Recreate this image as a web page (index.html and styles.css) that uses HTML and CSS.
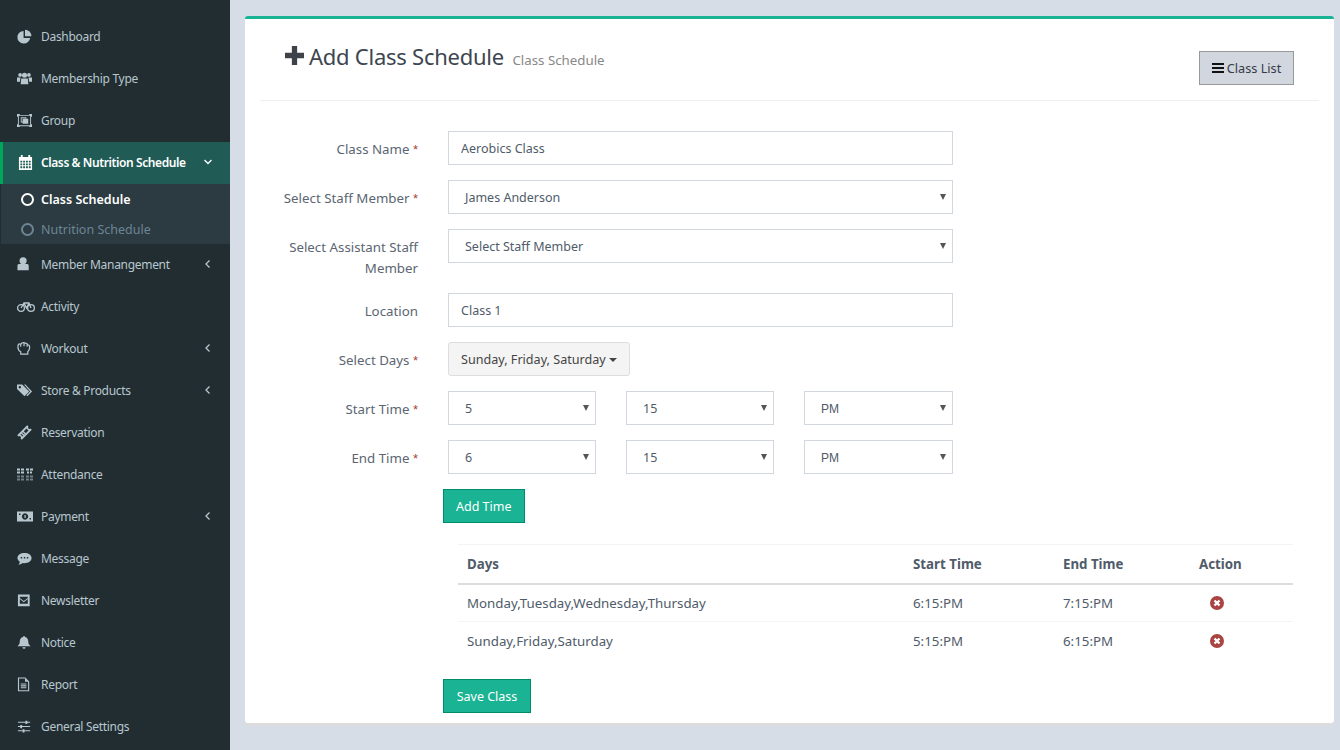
FILE: index.html
```html
<!DOCTYPE html>
<html lang="en">
<head>
    <meta charset="UTF-8">
    <title>Add Class Schedule</title>
    <link rel="stylesheet" href="styles.css">
</head>
<body>
    <aside class="sidebar">
        <ul class="menu">
            <li class="item"><svg class="ico" viewBox="0 0 16 16"><path d="M7 2a6.800 6.800 0 1 0 7 7.500H7z"/><path d="M8.500 .8a6.800 6.800 0 0 1 6.800 6.800H8.500z"/></svg><span>Dashboard</span></li>
            <li class="item"><svg class="ico" viewBox="0 0 16 16"><circle cx="3.300" cy="4.200" r="2"/><circle cx="12.700" cy="4.200" r="2"/><circle cx="8" cy="4.600" r="2.700"/><path d="M0 7h3.700l-.6 4.500H0zM16 7h-3.700l.6 4.500H16zM4.500 8h7l.6 6H3.900z"/></svg><span>Membership Type</span></li>
            <li class="item"><svg class="ico" viewBox="0 0 16 16"><path fill-rule="evenodd" d="M0 1h3v1h10V1h3v3h-1v8h1v3h-3v-1H3v1H0v-3h1V4H0zM2 3v10h12V3zM4 4.500h6V6h2v5.500H6V10H4zM5 5.500v3.500h1V6h3v-.5z"/></svg><span>Group</span></li>
            <li class="item item-open"><svg class="ico" viewBox="0 0 16 16"><path fill-rule="evenodd" d="M3 0h2v2h6V0h2v2h2v14H1V2h2zM2.500 6v2h2V6zM5.500 6v2h2V6zM8.500 6v2h2V6zM11.500 6v2h2V6zM2.500 9v2h2V9zM5.500 9v2h2V9zM8.500 9v2h2V9zM11.500 9v2h2V9zM2.500 12v2h2v-2zM5.500 12v2h2v-2zM8.500 12v2h2v-2zM11.500 12v2h2v-2z"/></svg><span>Class &amp; Nutrition Schedule</span><svg class="chev" viewBox="0 0 10 10"><path d="M1.500 3l3.500 3.500L8.500 3"/></svg></li>
            <li class="sub">
                <div class="sub-link sub-active"><i class="dot"></i>Class Schedule</div>
                <div class="sub-link"><i class="dot"></i>Nutrition Schedule</div>
            </li>
            <li class="item"><svg class="ico" viewBox="0 0 16 16"><circle cx="6.500" cy="4" r="3.800"/><path d="M2 7.500h9c1 0 1.500 1 1.500 2v4.500H.5V9.500c0-1 .5-2 1.500-2z"/></svg><span>Member Manangement</span><svg class="chev" viewBox="0 0 10 10"><path d="M6.500 1.500L3 5l3.500 3.500"/></svg></li>
            <li class="item"><svg class="ico ico-bike" viewBox="0 0 18 12"><g fill="none" stroke="currentColor" stroke-width="1.300"><circle cx="4" cy="7.500" r="3.400"/><circle cx="14" cy="7.500" r="3.400"/><path d="M4 7.500L7 2.500h5l2 5M7 2.500l2.500 5L12 2.500"/></g></svg><span>Activity</span></li>
            <li class="item"><svg class="ico" viewBox="0 0 16 16"><g fill="none" stroke="currentColor" stroke-width="1.300"><path d="M1 6c0-2 1-3 2-3l1 .5C5 2 7 1.500 8 2s3 .5 3.500 2c1 0 2 1 2 3s-1 3.500-2 4.500V14H4v-2.500C2 10.500 1 8.500 1 6z"/><path d="M4 3.500V6M7.500 2V5.500M10.800 3.500V6"/></g></svg><span>Workout</span><svg class="chev" viewBox="0 0 10 10"><path d="M6.500 1.500L3 5l3.500 3.500"/></svg></li>
            <li class="item"><svg class="ico" viewBox="0 0 16 16"><path fill-rule="evenodd" d="M0 1.500h5.500l7.500 7.500-5 5L0 6.500zM3 3.200a1.300 1.300 0 1 0 .01 0z"/><path d="M7.500 1.500h1.500l7 7.500-5 5-1-1 4-4z"/></svg><span>Store &amp; Products</span><svg class="chev" viewBox="0 0 10 10"><path d="M6.500 1.500L3 5l3.500 3.500"/></svg></li>
            <li class="item"><svg class="ico" viewBox="0 0 16 16"><path fill-rule="evenodd" transform="rotate(-45 8 8)" d="M.5 4.500h15v2a1.500 1.500 0 0 0 0 3v2H.5v-2a1.500 1.500 0 0 0 0-3zM3.500 6.500v3h1v-3zM6 6.500v3h1v-3zM8.500 6.500v3h4v-3z"/></svg><span>Reservation</span></li>
            <li class="item"><svg class="ico ico-wide" viewBox="0 0 16 12"><path d="M0 0h3v2H0zM4 0h3v2H4zM9 0h3v2H9zM13 0h3v2h-3zM0 3h3v2H0zM4 3h3v2H4zM10 3h2v2h-2zM13 3h2v2h-2z"/><path opacity=".55" d="M0 7h3v2H0zM4 7h3v2H4zM9 7h3v2H9zM13 7h3v2h-3zM0 10h3v2H0zM4 10h3v2H4zM9 10h3v2H9zM13 10h3v2h-3z"/></svg><span>Attendance</span></li>
            <li class="item"><svg class="ico ico-wide" viewBox="0 0 16 12"><path fill-rule="evenodd" d="M0 1h16v10H0zM8 2.800a3.200 3.200 0 1 0 .01 0zM7.500 4.500h1.200v3H7.500zM2 3v1.500h1.500V3zM12.500 7.500V9H14V7.500z"/></svg><span>Payment</span><svg class="chev" viewBox="0 0 10 10"><path d="M6.500 1.500L3 5l3.500 3.500"/></svg></li>
            <li class="item"><svg class="ico" viewBox="0 0 16 16"><path fill-rule="evenodd" d="M8 2c4 0 7.500 2 7.500 5.500S12 13 8 13c-.8 0-1.500 0-2-.2C4.500 14 3 14.500 1.500 14.500c1-1 1.500-2 1.500-3C1.500 10.500.5 9 .5 7.500.5 4 4 2 8 2zM4 6.500v1.500h1.500V6.500zM7.300 6.500v1.500h1.500V6.500zM10.500 6.500v1.500H12V6.500z"/></svg><span>Message</span></li>
            <li class="item"><svg class="ico" viewBox="0 0 16 16"><path fill-rule="evenodd" d="M1 1.500h12.500V14H1zM3 4v1.200L7.200 8.500l4.300-3.300V4zM3 6.500V11.500h8.500V6.500L7.200 9.800z"/></svg><span>Newsletter</span></li>
            <li class="item"><svg class="ico" viewBox="0 0 16 16"><path d="M7.500 1a1 1 0 0 1 1 1c2.500.5 3.500 2.500 3.500 5 0 2.500 1 3.800 2.500 5H.5C2 10.800 3 9.500 3 7c0-2.500 1-4.500 3.500-5a1 1 0 0 1 1-1zM5.800 13h3.400a1.700 1.700 0 0 1-3.400 0z"/></svg><span>Notice</span></li>
            <li class="item"><svg class="ico" viewBox="0 0 16 16"><path fill="none" stroke="currentColor" stroke-width="1.200" d="M1.600 1h7l3.800 4v9.600H1.600zM4 7.500h6M4 9.500h6M4 11.500h6"/><path d="M8.500 1l4 4h-4z"/></svg><span>Report</span></li>
            <li class="item"><svg class="ico" viewBox="0 0 16 16"><path d="M1 3h13v1H1zM1 7.500h13v1H1zM1 12h13v1H1zM9 1.800h2v3.500H9zM3.500 6.300h2v3.500h-2zM6 10.800h2v3.500H6z"/></svg><span>General Settings</span></li>
        </ul>
    </aside>

    <main class="content">
        <section class="panel">
            <header class="panel-head">
                <h1 class="panel-title"><svg class="plus" viewBox="0 0 18 18"><path d="M6.500 0h5v6.500H18v5h-6.500V18h-5v-6.500H0v-5h6.500z"/></svg>Add Class Schedule <small>Class Schedule</small></h1>
                <button class="btn-list"><svg class="bars" viewBox="0 0 12 10"><path d="M0 0h12v2H0zM0 4h12v2H0zM0 8h12v2H0z"/></svg>Class List</button>
            </header>

            <form class="form">
                <div class="row">
                    <label class="lbl">Class Name <b>*</b></label>
                    <div class="field"><input class="ctl" type="text" value="Aerobics Class"></div>
                </div>
                <div class="row">
                    <label class="lbl">Select Staff Member <b>*</b></label>
                    <div class="field"><div class="ctl sel">James Anderson</div></div>
                </div>
                <div class="row">
                    <label class="lbl">Select Assistant Staff Member</label>
                    <div class="field"><div class="ctl sel">Select Staff Member</div></div>
                </div>
                <div class="row">
                    <label class="lbl">Location</label>
                    <div class="field"><input class="ctl" type="text" value="Class 1"></div>
                </div>
                <div class="row">
                    <label class="lbl">Select Days <b>*</b></label>
                    <div class="field"><button type="button" class="btn-days">Sunday, Friday, Saturday <i class="caret"></i></button></div>
                </div>
                <div class="row">
                    <label class="lbl">Start Time <b>*</b></label>
                    <div class="field times">
                        <div class="ctl sel">5</div>
                        <div class="ctl sel">15</div>
                        <div class="ctl sel sel-ampm">PM</div>
                    </div>
                </div>
                <div class="row">
                    <label class="lbl">End Time <b>*</b></label>
                    <div class="field times">
                        <div class="ctl sel">6</div>
                        <div class="ctl sel">15</div>
                        <div class="ctl sel sel-ampm">PM</div>
                    </div>
                </div>
                <div class="action"><button type="button" class="btn-green">Add Time</button></div>

                <table class="times-table">
                    <thead>
                        <tr><th class="col-days">Days</th><th class="col-time">Start Time</th><th class="col-end">End Time</th><th>Action</th></tr>
                    </thead>
                    <tbody>
                        <tr>
                            <td>Monday,Tuesday,Wednesday,Thursday</td><td>6:15:PM</td><td>7:15:PM</td>
                            <td><svg class="del" viewBox="0 0 14 14"><circle cx="7" cy="7" r="7"/><path d="M4.500 4.500l5 5M9.500 4.500l-5 5"/></svg></td>
                        </tr>
                        <tr>
                            <td>Sunday,Friday,Saturday</td><td>5:15:PM</td><td>6:15:PM</td>
                            <td><svg class="del" viewBox="0 0 14 14"><circle cx="7" cy="7" r="7"/><path d="M4.500 4.500l5 5M9.500 4.500l-5 5"/></svg></td>
                        </tr>
                    </tbody>
                </table>

                <div class="action action-save"><button type="button" class="btn-green">Save Class</button></div>
            </form>
        </section>
    </main>
</body>
</html>
```

FILE: styles.css
```css
* { box-sizing: border-box; }
html, body { height: 100%; }
body { margin: 0; display: flex; height: 750px; overflow: hidden; background: #d6dde7; font-family: "Noto Sans", Arial, sans-serif; font-size: 13px; color: #4f5b69; }

/* sidebar */
.sidebar { width: 230px; flex: none; background: #222d32; padding-top: 16px; }
.menu { list-style: none; margin: 0; padding: 0; }
.item { display: flex; align-items: center; height: 42px; padding: 0 17px 2px; color: #b8c7ce; font-size: 12px; letter-spacing: -0.3px; }
.item span { flex: 1; }
.ico { width: 15px; height: 15px; margin-right: 9px; fill: #b8c7ce; color: #b8c7ce; flex: none; }
.ico-wide { width: 16px; margin-right: 8px; }
.ico-bike { width: 18px; margin-right: 6px; }
.chev { width: 10px; height: 10px; fill: none; stroke: #b8c7ce; stroke-width: 1.300; }
.item-open { background: #205c55; border-left: 3px solid #00a65a; padding-left: 15px; color: #fff; font-weight: 600; letter-spacing: -0.4px; }
.item-open .ico { fill: #fff; margin-right: 8px; }
.item-open .chev { stroke: #fff; }
.sub { background: #2c3b41; border-left: 1px solid #222d32; height: 60px; }
.sub-link { display: flex; align-items: center; height: 30px; padding-left: 20px; color: #6d8594; font-size: 12.500px; }
.sub-active { color: #fff; font-weight: 600; }
.dot { width: 13px; height: 13px; border: 2px solid currentColor; border-radius: 50%; margin-right: 7px; }

/* panel */
.content { flex: 1; padding: 16px 6px 0 15px; }
.panel { height: 707px; background: #fff; border-top: 3px solid #1ab394; border-radius: 3px; box-shadow: 0 3px 0 #dcdcdc; padding: 0 15px; }
.panel-head { display: flex; justify-content: space-between; height: 82px; border-bottom: 1px solid #eee; padding: 0 25px; }
.panel-title { margin: 21px 0 0; font-size: 22px; font-weight: 400; letter-spacing: -0.25px; color: #3d4650; line-height: 32px; white-space: nowrap; }
.panel-title small { font-size: 13.300px; letter-spacing: 0; color: #888; margin-left: 3px; }
.plus { width: 19px; height: 19px; fill: #3d4349; margin-right: 5px; }
.btn-list { align-self: flex-start; margin-top: 32px; width: 95px; height: 34px; display: flex; align-items: center; justify-content: center; background: #d2d6de; border: 1px solid #999; color: #333c4b; font: inherit; font-size: 12.700px; padding: 0; }
.bars { width: 12px; height: 10px; margin-right: 3px; fill: #111; }

/* form */
.form { padding-top: 30px; }
.row { display: flex; margin-bottom: 15px; }
.lbl { width: 158px; margin: 0 30px -1px 0; text-align: right; line-height: 21px; padding-top: 8px; font-size: 13.300px; color: #5b6672; flex: none; }
.lbl b { color: #a94442; font-family: "Liberation Sans", Arial, sans-serif; font-weight: 400; font-size: 13px; }
.field { width: 505px; }
.ctl { display: block; width: 100%; height: 34px; border: 1px solid #d2d6de; padding: 0 12px; font: inherit; font-size: 12.500px; line-height: 32px; color: #4f5b69; background: #fff; outline: 0; }
.sel { position: relative; padding-left: 16px; line-height: 34px; }
.sel::after { content: ""; position: absolute; right: 6px; top: 13px; border: 3px solid transparent; border-top: 6px solid #555; border-bottom: 0; }
.sel-ampm { font-family: "Liberation Sans", Arial, sans-serif; font-size: 12px; }
.times { display: grid; grid-template-columns: 148px 148px 149px; gap: 30px; }
.btn-days { height: 34px; width: 182px; background: #f4f4f4; border: 1px solid #ddd; border-radius: 3px; color: #444; font: inherit; font-size: 12.600px; padding: 0; }
.caret { display: inline-block; border: 4px solid transparent; border-top-color: #444; border-bottom: 0; vertical-align: 2px; }
.action { padding-left: 183px; }
.btn-green { height: 34px; padding: 0 12px; background: #1ab394; border: 1px solid #008d6c; color: #fff; font: inherit; font-size: 12.500px; }

/* time table */
.times-table { margin: 21px 0 0 198px; width: 835px; border-collapse: collapse; table-layout: fixed; font-size: 13.300px; }
.times-table th { height: 39px; text-align: left; padding: 0 8px; border-top: 1px solid #f4f4f4; border-bottom: 2px solid #ddd; color: #4f5b69; font-weight: 700; font-size: 13.300px; }
.times-table td { height: 38px; padding: 0 8px; border-bottom: 1px solid #f4f4f4; }
.times-table td:first-child, .times-table th:first-child { padding-left: 9px; }
.times-table tr:last-child td { border-bottom: 0; }
.col-days { width: 447px; }
.col-time { width: 150px; }
.col-end { width: 136px; }
.del { display: block; width: 14px; height: 14px; margin-left: 11px; fill: #a94442; stroke: #fff; stroke-width: 0; }
.del path { stroke-width: 2.400; fill: none; }
.action-save { margin-top: 19px; }
.action-save .btn-green { width: 88px; padding: 2px 0 0; }
```
